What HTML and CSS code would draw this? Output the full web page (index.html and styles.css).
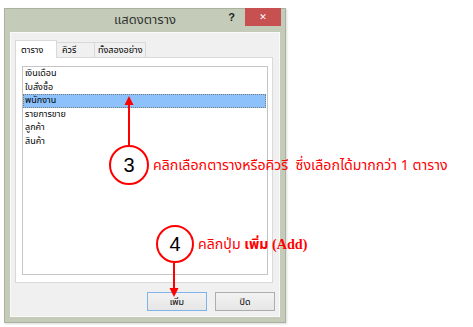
FILE: index.html
```html
<!DOCTYPE html>
<html>
	<head>
		<meta charset="UTF-8">
		<title>แสดงตาราง</title>
		<link rel="stylesheet" href="styles.css">
	</head>
	<body>
		<div class="dialog">
			<div class="titlebar">
				<span></span>
				<span class="title">แสดงตาราง</span>
				<span class="controls">
					<span class="help">?</span>
					<span class="close">&#x2715;</span>
				</span>
			</div>
			<div class="client">
				<div class="tabs">
					<span class="tab active">ตาราง</span>
					<span class="tab">คิวรี</span>
					<span class="tab">ทั้งสองอย่าง</span>
				</div>
				<div class="panel">
					<ul class="list">
						<li>เงินเดือน</li>
						<li>ใบสั่งซื้อ</li>
						<li class="selected">พนักงาน</li>
						<li>รายการขาย</li>
						<li>ลูกค้า</li>
						<li>สินค้า</li>
					</ul>
				</div>
				<div class="buttons">
					<button class="default">เพิ่ม</button>
					<button>ปิด</button>
				</div>
			</div>
		</div>

		<svg class="arrows" width="473" height="327" viewBox="0 0 473 327">
			<line x1="129" y1="104" x2="129" y2="146" stroke="#f00" stroke-width="2"/>
			<polygon points="129,96 124.5,105 133.5,105" fill="#f00"/>
			<line x1="174" y1="263" x2="174" y2="289" stroke="#f00" stroke-width="2"/>
			<polygon points="174,297 169.5,288 178.5,288" fill="#f00"/>
		</svg>

		<div class="step step-3">
			<span class="num">3</span>
			<span class="note">คลิกเลือกตารางหรือคิวรี &nbsp;ซึ่งเลือกได้มากกว่า 1 ตาราง</span>
		</div>
		<div class="step step-4">
			<span class="num">4</span>
			<span class="note">คลิกปุ่ม <b>เพิ่ม (Add)</b></span>
		</div>
	</body>
</html>
```

FILE: styles.css
```css
* {
	box-sizing: border-box;
}
body {
	margin: 0;
	background: #fff;
	font-family: "Noto Sans Thai", Tahoma, "DejaVu Sans", sans-serif;
	font-size: 9px;
	color: #000;
	position: relative;
	width: 473px;
	height: 327px;
	overflow: hidden;
}
.dialog {
	margin: 8px 0 0 4px;
	width: 282px;
	height: 315px;
	background: #c4ccb9;
	border: 1px solid #aab29f;
	padding: 0 5px 5px 5px;
	display: flex;
	flex-direction: column;
	box-shadow: 1px 1px 2px rgba(0, 0, 0, 0.15);
}
.titlebar {
	height: 23px;
	display: grid;
	grid-template-columns: 1fr auto 1fr;
	align-items: start;
}
.title {
	font-size: 13px;
	color: #333;
	line-height: 23px;
}
.controls {
	display: flex;
	justify-content: flex-end;
	align-items: flex-start;
	margin-right: -1px;
}
.help {
	font-family: "Liberation Sans", sans-serif;
	font-weight: bold;
	font-size: 11px;
	color: #222;
	margin: 2px 10px 0 0;
}
.close {
	margin-top: -1px;
	width: 36px;
	height: 18px;
	background: #c75050;
	color: #fff;
	font-family: "DejaVu Sans", sans-serif;
	font-weight: bold;
	font-size: 9px;
	display: flex;
	align-items: center;
	justify-content: center;
}
.client {
	flex: 1;
	background: #f0f0f0;
	border: 1px solid #fafafa;
	padding: 7px 4px 5px 4px;
	display: flex;
	flex-direction: column;
}
.tabs {
	display: flex;
	height: 17px;
	align-items: flex-end;
	position: relative;
	z-index: 1;
}
.tab {
	height: 15px;
	padding: 0 5px;
	border: 1px solid #d9d9d9;
	border-bottom: none;
	background: #f0f0f0;
	font-size: 9px;
	line-height: 14px;
	white-space: nowrap;
	margin-left: -1px;
}
.tab:nth-child(2) {
	width: 39px;
}
.tab:nth-child(3) {
	padding: 0 3px;
}
.tab.active {
	width: 42px;
	height: 18px;
	margin: 0 0 -1px 0;
	background: #fff;
	padding-top: 2px;
}
.panel {
	height: 226px;
	width: 258px;
	background: #fff;
	border: 1px solid #d9d9d9;
	padding: 8px 4px 7px 6px;
}
.list {
	margin: 0;
	padding: 0;
	list-style: none;
	height: 100%;
	border: 1px solid #c5c5c5;
}
.list li {
	height: 13.6px;
	line-height: 13.6px;
	padding-left: 2px;
	white-space: nowrap;
}
.list li.selected {
	background: #8cc1fb;
	outline: 1px dotted #7a7a7a;
	outline-offset: -1px;
	margin-right: 1px;
}
.buttons {
	margin-top: 9px;
	display: flex;
	justify-content: flex-end;
	gap: 8px;
}
button {
	width: 60px;
	height: 19px;
	padding: 0;
	font-family: inherit;
	font-size: 9px;
	color: #000;
	background: linear-gradient(#f2f2f2, #e6e6e6);
	border: 1px solid #adadad;
}
button.default {
	border-color: #7eb4ea;
}
.arrows {
	position: absolute;
	left: 0;
	top: 0;
	pointer-events: none;
}
.step {
	position: absolute;
	display: flex;
	align-items: center;
}
.step-3 {
	left: 109px;
	top: 145px;
}
.step-4 {
	left: 156px;
	top: 225px;
}
.num {
	width: 40px;
	height: 40px;
	border: 2px solid #f00;
	border-radius: 50%;
	background: #fff;
	display: flex;
	align-items: center;
	justify-content: center;
	font-family: "Liberation Sans", sans-serif;
	font-size: 20px;
	color: #000;
}
.step-4 .num {
	width: 38px;
	height: 38px;
}
.note {
	margin-left: 4px;
	color: #f00;
	font-size: 14.2px;
	white-space: nowrap;
}
.note b {
	font-family: "Liberation Serif", "Noto Sans Thai", serif;
}
```
